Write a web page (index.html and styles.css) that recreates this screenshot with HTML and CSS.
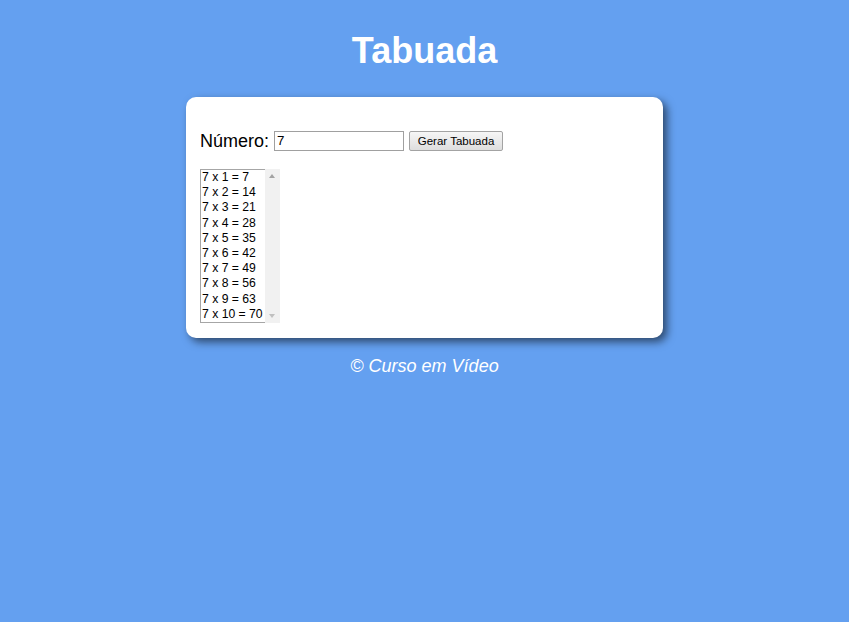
FILE: index.html
```html
<!DOCTYPE html>
<html lang="pt-br">
<head>
<meta charset="UTF-8">
<title>Tabuada</title>
<link rel="stylesheet" href="styles.css">
</head>
<body>
<header class="topo">
  <h1 class="titulo">Tabuada</h1>
</header>
<section class="cartao">
  <p class="linha">Número: <span class="campo">7</span> <span class="botao">Gerar Tabuada</span></p>
  <div class="lista">
    <div class="opcoes">
      <div class="opcao">7 x 1 = 7</div>
      <div class="opcao">7 x 2 = 14</div>
      <div class="opcao">7 x 3 = 21</div>
      <div class="opcao">7 x 4 = 28</div>
      <div class="opcao">7 x 5 = 35</div>
      <div class="opcao">7 x 6 = 42</div>
      <div class="opcao">7 x 7 = 49</div>
      <div class="opcao">7 x 8 = 56</div>
      <div class="opcao">7 x 9 = 63</div>
      <div class="opcao">7 x 10 = 70</div>
    </div>
    <div class="rolagem">
      <span class="seta seta-cima"></span>
      <span class="seta seta-baixo"></span>
    </div>
  </div>
</section>
<footer class="rodape">
  <p class="credito">&copy; Curso em Vídeo</p>
</footer>
</body>
</html>
```
FILE: styles.css
```css
html, body {
  margin: 0;
  padding: 0;
}
body {
  background: #64a0f0;
  font-family: "Liberation Sans", Arial, sans-serif;
  padding: 8px;
  min-height: 622px;
  box-sizing: border-box;
}
.topo {
  text-align: center;
  color: white;
}
.titulo {
  margin: 21px 0 0;
  font-size: 36px;
  line-height: 44px;
  font-weight: bold;
}
.cartao {
  width: 449px;
  margin: 24px auto 0;
  background: white;
  border-radius: 10px;
  padding: 15px 14px 15px 14px;
  box-shadow: 4px 4px 8px rgba(0, 0, 0, 0.55);
}
.linha {
  margin: 19px 0 18px;
  font-size: 18px;
  line-height: 20px;
  display: flex;
  align-items: center;
  height: 20px;
}
.campo {
  display: inline-block;
  box-sizing: border-box;
  width: 130px;
  height: 20px;
  border: 1px solid #a0a0a0;
  font-size: 13.33px;
  line-height: 18px;
  padding-left: 2px;
  margin-left: 5px;
}
.botao {
  display: inline-block;
  box-sizing: border-box;
  height: 20px;
  width: 94px;
  margin-left: 5px;
  border: 1px solid #a3a3a3;
  border-radius: 2px;
  background: linear-gradient(#f6f6f6, #dedede);
  font-size: 11.5px;
  line-height: 18px;
  text-align: center;
}
.lista {
  display: flex;
  width: 80px;
  height: 154px;
  box-sizing: border-box;
}
.opcoes {
  box-sizing: border-box;
  width: 65px;
  border: 1px solid #a6a6a6;
  border-right: none;
}
.opcao {
  font-size: 12.2px;
  line-height: 15.2px;
  padding-left: 1px;
  white-space: nowrap;
}
.rolagem {
  width: 15px;
  background: #f1f1f1;
  position: relative;
}
.seta {
  position: absolute;
  left: 4px;
  width: 0;
  height: 0;
  border-left: 3.5px solid transparent;
  border-right: 3.5px solid transparent;
}
.seta-cima {
  top: 5px;
  border-bottom: 4px solid #a3a3a3;
}
.seta-baixo {
  bottom: 5px;
  border-top: 4px solid #c0c0c0;
}
.rodape {
  text-align: center;
  color: white;
}
.credito {
  margin: 18px 0 0;
  font-size: 18px;
  font-style: italic;
}
```
